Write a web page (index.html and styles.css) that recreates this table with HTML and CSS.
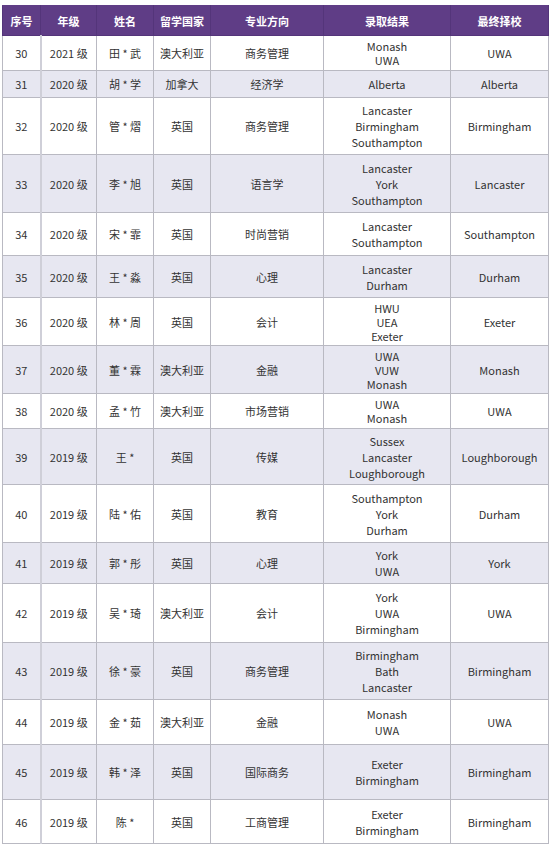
FILE: index.html
```html
<!DOCTYPE html>
<html lang="zh">
<head>
<meta charset="utf-8">
<link rel="stylesheet" href="styles.css">
</head>
<body>
<table class="offers">
  <colgroup>
    <col class="c-no"><col class="c-year"><col class="c-name"><col class="c-country"><col class="c-major"><col class="c-result"><col class="c-final">
  </colgroup>
  <thead>
    <tr><th>序号</th><th>年级</th><th>姓名</th><th>留学国家</th><th>专业方向</th><th>录取结果</th><th>最终择校</th></tr>
  </thead>
  <tbody>
    <tr class="tight"><td>30</td><td>2021 级</td><td>田 * 武</td><td>澳大利亚</td><td>商务管理</td><td>Monash<br>UWA</td><td>UWA</td></tr>
    <tr><td>31</td><td>2020 级</td><td>胡 * 学</td><td>加拿大</td><td>经济学</td><td>Alberta</td><td>Alberta</td></tr>
    <tr><td>32</td><td>2020 级</td><td>管 * 熠</td><td>英国</td><td>商务管理</td><td>Lancaster<br>Birmingham<br>Southampton</td><td>Birmingham</td></tr>
    <tr><td>33</td><td>2020 级</td><td>李 * 旭</td><td>英国</td><td>语言学</td><td>Lancaster<br>York<br>Southampton</td><td>Lancaster</td></tr>
    <tr><td>34</td><td>2020 级</td><td>宋 * 霏</td><td>英国</td><td>时尚营销</td><td>Lancaster<br>Southampton</td><td>Southampton</td></tr>
    <tr><td>35</td><td>2020 级</td><td>王 * 淼</td><td>英国</td><td>心理</td><td>Lancaster<br>Durham</td><td>Durham</td></tr>
    <tr class="tight"><td>36</td><td>2020 级</td><td>林 * 周</td><td>英国</td><td>会计</td><td>HWU<br>UEA<br>Exeter</td><td>Exeter</td></tr>
    <tr class="tight"><td>37</td><td>2020 级</td><td>董 * 霖</td><td>澳大利亚</td><td>金融</td><td>UWA<br>VUW<br>Monash</td><td>Monash</td></tr>
    <tr class="tight"><td>38</td><td>2020 级</td><td>孟 * 竹</td><td>澳大利亚</td><td>市场营销</td><td>UWA<br>Monash</td><td>UWA</td></tr>
    <tr><td>39</td><td>2019 级</td><td>王 *</td><td>英国</td><td>传媒</td><td>Sussex<br>Lancaster<br>Loughborough</td><td>Loughborough</td></tr>
    <tr><td>40</td><td>2019 级</td><td>陆 * 佑</td><td>英国</td><td>教育</td><td>Southampton<br>York<br>Durham</td><td>Durham</td></tr>
    <tr><td>41</td><td>2019 级</td><td>郭 * 彤</td><td>英国</td><td>心理</td><td>York<br>UWA</td><td>York</td></tr>
    <tr><td>42</td><td>2019 级</td><td>吴 * 琦</td><td>澳大利亚</td><td>会计</td><td>York<br>UWA<br>Birmingham</td><td>UWA</td></tr>
    <tr><td>43</td><td>2019 级</td><td>徐 * 豪</td><td>英国</td><td>商务管理</td><td>Birmingham<br>Bath<br>Lancaster</td><td>Birmingham</td></tr>
    <tr><td>44</td><td>2019 级</td><td>金 * 茹</td><td>澳大利亚</td><td>金融</td><td>Monash<br>UWA</td><td>UWA</td></tr>
    <tr><td>45</td><td>2019 级</td><td>韩 * 泽</td><td>英国</td><td>国际商务</td><td>Exeter<br>Birmingham</td><td>Birmingham</td></tr>
    <tr><td>46</td><td>2019 级</td><td>陈 *</td><td>英国</td><td>工商管理</td><td>Exeter<br>Birmingham</td><td>Birmingham</td></tr>
  </tbody>
</table>
</body>
</html>
```
FILE: styles.css
```css
html, body {
  margin: 0;
  padding: 0;
  background: #ffffff;
}

body {
  padding: 5px 0 0 2px;
  font-family: "Noto Sans CJK SC", "Noto Sans", sans-serif;
  font-size: 11px;
  color: #333333;
}

.offers {
  border-collapse: collapse;
  table-layout: fixed;
  width: 546px;
}

.c-no { width: 38px; }
.c-year { width: 56px; }
.c-name { width: 57px; }
.c-country { width: 57px; }
.c-major { width: 113px; }
.c-result { width: 127px; }
.c-final { width: 98px; }

.offers th,
.offers td {
  border: 1px solid #b9b9c2;
  text-align: center;
  vertical-align: middle;
  padding: 0;
  line-height: 16px;
}

.offers th {
  background: #5f3d86;
  color: #ffffff;
  font-weight: bold;
  border-color: #54357a;
  border-top-color: #5f3d86;
}

.offers thead tr { height: 30px; }

.offers tbody tr:nth-child(even) td {
  background: #e7e7f1;
}

.offers td:first-child {
  border-right: 2px solid #cfcfd8;
}

.offers tr.tight td { line-height: 14px; }

.offers tbody tr:nth-child(1) { height: 35px; }
.offers tbody tr:nth-child(2) { height: 27px; }
.offers tbody tr:nth-child(3) { height: 57px; }
.offers tbody tr:nth-child(4) { height: 58px; }
.offers tbody tr:nth-child(5) { height: 43px; }
.offers tbody tr:nth-child(6) { height: 42px; }
.offers tbody tr:nth-child(7) { height: 48px; }
.offers tbody tr:nth-child(8) { height: 48px; }
.offers tbody tr:nth-child(9) { height: 35px; }
.offers tbody tr:nth-child(10) { height: 56px; }
.offers tbody tr:nth-child(11) { height: 58px; }
.offers tbody tr:nth-child(12) { height: 41px; }
.offers tbody tr:nth-child(13) { height: 59px; }
.offers tbody tr:nth-child(14) { height: 57px; }
.offers tbody tr:nth-child(15) { height: 45px; }
.offers tbody tr:nth-child(16) { height: 55px; }
.offers tbody tr:nth-child(17) { height: 44px; }
```
